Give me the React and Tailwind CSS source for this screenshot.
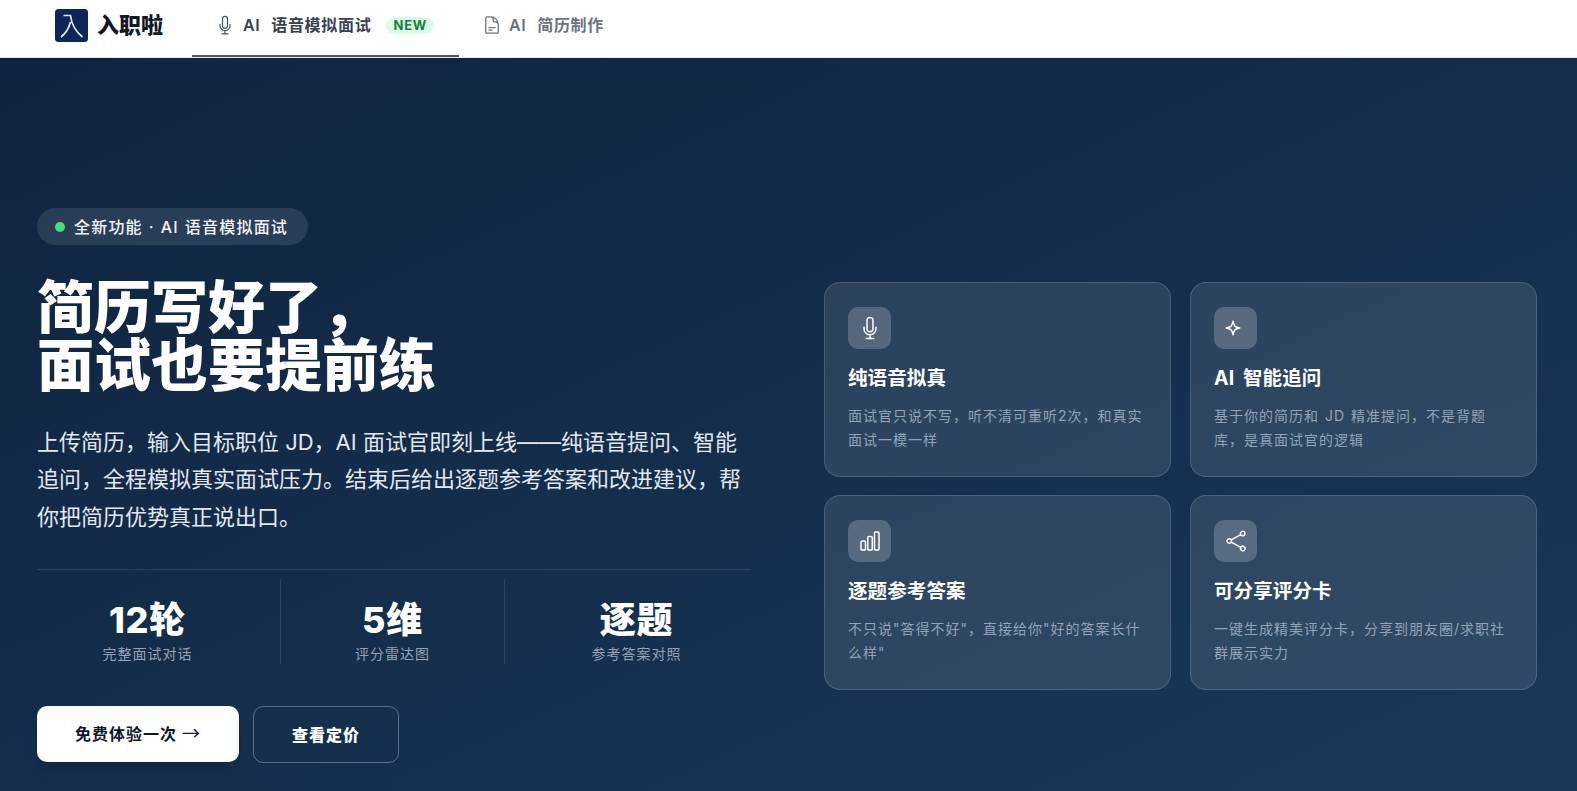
import React from "react";

const MIC = "M12 18.75a6 6 0 0 0 6-6v-1.5m-6 7.5a6 6 0 0 1-6-6v-1.5m6 7.5v3.75m-3.75 0h7.5M12 15.75a3 3 0 0 1-3-3V4.5a3 3 0 1 1 6 0v8.25a3 3 0 0 1-3 3Z";
const DOC = "M19.5 14.25v-2.625a3.375 3.375 0 0 0-3.375-3.375h-1.5A1.125 1.125 0 0 1 13.5 7.125v-1.5a3.375 3.375 0 0 0-3.375-3.375H8.25m0 12.75h7.5m-7.5 3H12M10.5 2.25H5.625c-.621 0-1.125.504-1.125 1.125v17.25c0 .621.504 1.125 1.125 1.125h12.75c.621 0 1.125-.504 1.125-1.125V11.25a9 9 0 0 0-9-9Z";
const SPARK = "M9.813 15.904 9 18.75l-.813-2.846a4.5 4.5 0 0 0-3.09-3.09L2.25 12l2.846-.813a4.5 4.5 0 0 0 3.09-3.09L9 5.25l.813 2.846a4.5 4.5 0 0 0 3.09 3.09L15.75 12l-2.846.813a4.5 4.5 0 0 0-3.09 3.09Z";
const BARS = "M3 13.125C3 12.504 3.504 12 4.125 12h2.25c.621 0 1.125.504 1.125 1.125v6.75C7.5 20.496 6.996 21 6.375 21h-2.25A1.125 1.125 0 0 1 3 19.875v-6.75ZM9.75 8.625c0-.621.504-1.125 1.125-1.125h2.25c.621 0 1.125.504 1.125 1.125v11.25c0 .621-.504 1.125-1.125 1.125h-2.25a1.125 1.125 0 0 1-1.125-1.125V8.625ZM16.5 4.125c0-.621.504-1.125 1.125-1.125h2.25C20.496 3 21 3.504 21 4.125v15.75c0 .621-.504 1.125-1.125 1.125h-2.25a1.125 1.125 0 0 1-1.125-1.125V4.125Z";
const SHARE = "M7.217 10.907a2.25 2.25 0 1 0 0 2.186m0-2.186c.18.324.283.696.283 1.093s-.103.77-.283 1.093m0-2.186 9.566-5.314m-9.566 7.5 9.566 5.314m0 0a2.25 2.25 0 1 0 3.935 2.186 2.25 2.25 0 0 0-3.935-2.186Zm0-12.814a2.25 2.25 0 1 0 3.933-2.185 2.25 2.25 0 0 0-3.933 2.185Z";

function Icon({ d, className }) {
  return (
    <svg className={className} viewBox="0 0 24 24" fill="none" stroke="currentColor" strokeWidth="1.5" strokeLinecap="round" strokeLinejoin="round">
      <path d={d} />
    </svg>
  );
}

const features = [
  { icon: MIC, title: "纯语音拟真", desc: "面试官只说不写，听不清可重听2次，和真实面试一模一样" },
  { icon: SPARK, title: "AI 智能追问", desc: "基于你的简历和 JD 精准提问，不是背题库，是真面试官的逻辑" },
  { icon: BARS, title: "逐题参考答案", desc: "不只说\"答得不好\"，直接给你\"好的答案长什么样\"" },
  { icon: SHARE, title: "可分享评分卡", desc: "一键生成精美评分卡，分享到朋友圈/求职社群展示实力" },
];

const stats = [
  { value: "12轮", label: "完整面试对话", cell: "w-[244px] pr-[22px] border-r border-white/10" },
  { value: "5维", label: "评分雷达图", cell: "w-[224px] border-r border-white/10" },
  { value: "逐题", label: "参考答案对照", cell: "flex-1 pl-[18px]" },
];

export default function App() {
  return (
    <div className="min-h-[791px] flex flex-col bg-white font-['Inter','Noto_Sans_CJK_SC',sans-serif] overflow-hidden">
      {/* Nav */}
      <nav className="h-[58px] shrink-0 flex items-stretch pl-[55px] bg-white border-b border-gray-200">
        <div className="flex items-center gap-[9px] mb-[7px]">
          <svg className="w-[33px] h-[33px]" viewBox="0 0 33 33">
            <rect width="33" height="33" rx="3.5" fill="#0d2557" />
            <path d="M8.5 6.5h7c1 8 5 16 12 21.5M15.5 13C14 19 11 24 6 28" fill="none" stroke="#e6ebf3" strokeWidth="1.7" />
          </svg>
          <span className="text-[22px] font-black text-[#111827]">入职啦</span>
        </div>
        <div className="ml-[29px] w-[267px] flex items-center pl-[23px] pb-[5px] border-b-2 border-[#4b5563] text-[#374151]">
          <Icon d={MIC} className="w-[20px] h-[20px] mr-[8px] text-[#4b5563]" />
          <span className="text-[16px] font-semibold tracking-[0.7px] [word-spacing:6px]">AI 语音模拟面试</span>
          <span className="ml-[15px] px-[7px] h-[17px] rounded-full bg-[#dcfce7] text-[#15803d] text-[13px] leading-[17px] font-bold tracking-[0.8px]">NEW</span>
        </div>
        <div className="flex items-center pl-[23px] pb-[7px] text-[#6b7280]">
          <Icon d={DOC} className="w-[20px] h-[20px] mr-[7px]" />
          <span className="text-[16px] font-semibold tracking-[0.7px] [word-spacing:6px]">AI 简历制作</span>
        </div>
      </nav>

      {/* Hero */}
      <main className="flex-1 grid grid-cols-2 gap-[74px] items-center pl-[37px] pr-[40px] pt-[150px] pb-[28px] bg-gradient-to-br from-[#0f2440] to-[#1a3858] text-white">
        <div className="flex flex-col items-start">
          <div className="flex items-center h-[37px] pl-[18px] pr-[20px] rounded-full bg-white/10 text-[16px] tracking-[1.2px] [word-spacing:0.5px] font-medium text-[#f1f5f9]">
            <span className="w-[10px] h-[10px] rounded-full bg-[#4ade80] mr-[9px]" />
            全新功能 · AI 语音模拟面试
          </div>
          <h1 className="mt-[34px] text-[57px] leading-[58px] font-black">
            简历写好了，<br />面试也要提前练
          </h1>
          <p className="mt-[29px] text-[22px] leading-[37.4px] text-[#e2e8f0]">
            上传简历，输入目标职位 JD，AI 面试官即刻上线——纯语音提问、智能追问，全程模拟真实面试压力。结束后给出逐题参考答案和改进建议，帮你把简历优势真正说出口。
          </p>
          <div className="mt-[33px] w-full border-t border-white/10 pt-[9px] flex">
            {stats.map((s) => (
              <div key={s.label} className={`${s.cell} h-[85px] flex flex-col items-center justify-end`}>
                <div className="text-[36px] leading-[46px] font-extrabold tracking-[0.8px]">{s.value}</div>
                <div className="text-[14px] leading-[21px] tracking-[1px] text-[#94a3b8]">{s.label}</div>
              </div>
            ))}
          </div>
          <div className="mt-[42px] flex gap-[14px] items-start">
            <button className="w-[202px] h-[56px] rounded-[10px] bg-white text-[#0f172a] text-[16px] font-semibold tracking-[1px] shadow-lg shadow-black/10">
              免费体验一次 <span className="font-['Noto_Sans_CJK_SC'] text-[18px] font-normal leading-none">→</span>
            </button>
            <button className="w-[146px] h-[57px] rounded-[10px] border border-white/30 text-white text-[16px] font-extrabold tracking-[1px]">
              查看定价
            </button>
          </div>
        </div>

        <div className="grid grid-cols-2 gap-x-[19px] gap-y-[18px]">
          {features.map((f) => (
            <div key={f.title} className="h-[195px] rounded-[16px] border border-white/15 bg-white/10 pt-[24px] pl-[23px] pr-[25px]">
              <div className="w-[43px] h-[42px] rounded-[10px] bg-white/20 flex items-center justify-center text-white">
                <Icon d={f.icon} className="w-[24px] h-[24px]" />
              </div>
              <h3 className="mt-[14px] text-[19.5px] leading-[30px] font-bold tracking-[0.1px] [word-spacing:4px]">{f.title}</h3>
              <p className="mt-[11px] text-[14px] leading-[24.5px] tracking-[1px] [word-spacing:1px] text-[#94a3b8]">{f.desc}</p>
            </div>
          ))}
        </div>
      </main>
    </div>
  );
}
